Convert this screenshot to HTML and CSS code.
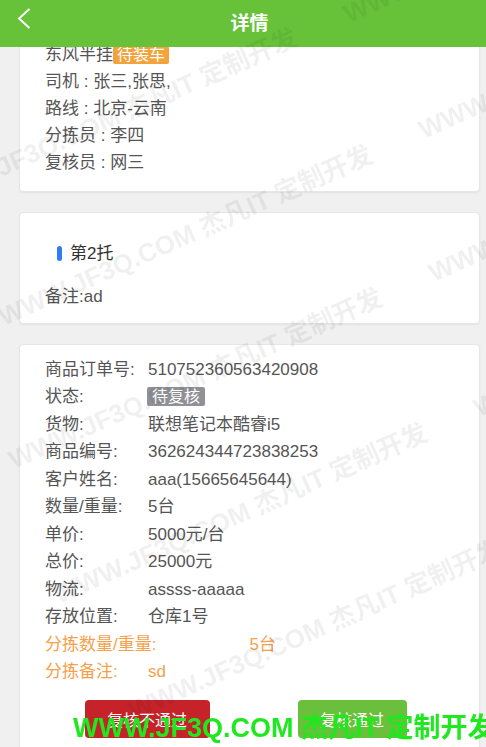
FILE: index.html
```html
<!DOCTYPE html>
<html lang="zh-CN">
<head>
<meta charset="utf-8">
<title>详情</title>
<link rel="stylesheet" href="styles.css">
</head>
<body>
<header class="topbar">
  <span class="back">
    <svg width="14" height="21" viewBox="0 0 14 21"><polyline points="12.5,1 2,10.5 12.5,20" fill="none" stroke="#fff" stroke-width="2"/></svg>
  </span>
  <h1 class="title">详情</h1>
</header>

<main class="page">
  <section class="card card-first">
    <div class="line">车辆 : 京A88888</div>
    <div class="line">东风半挂<span class="tag tag-orange">待装车</span></div>
    <div class="line">司机 : 张三,张思,</div>
    <div class="line">路线 : 北京-云南</div>
    <div class="line">分拣员 : 李四</div>
    <div class="line">复核员 : 网三</div>
  </section>

  <section class="card card-second">
    <h2 class="pallet"><span class="bar"></span>第2托</h2>
    <div class="line">备注:ad</div>
  </section>

  <section class="card card-third">
    <div class="row"><span class="label">商品订单号:</span><span class="value">510752360563420908</span></div>
    <div class="row"><span class="label">状态:</span><span class="value"><span class="tag tag-gray">待复核</span></span></div>
    <div class="row"><span class="label">货物:</span><span class="value">联想笔记本酷睿i5</span></div>
    <div class="row"><span class="label">商品编号:</span><span class="value">362624344723838253</span></div>
    <div class="row"><span class="label">客户姓名:</span><span class="value">aaa(15665645644)</span></div>
    <div class="row"><span class="label">数量/重量:</span><span class="value">5台</span></div>
    <div class="row"><span class="label">单价:</span><span class="value">5000元/台</span></div>
    <div class="row"><span class="label">总价:</span><span class="value">25000元</span></div>
    <div class="row"><span class="label">物流:</span><span class="value">assss-aaaaa</span></div>
    <div class="row"><span class="label">存放位置:</span><span class="value">仓库1号</span></div>
    <div class="row row-orange"><span class="label">分拣数量/重量:</span><span class="value value-far">5台</span></div>
    <div class="row row-orange"><span class="label">分拣备注:</span><span class="value">sd</span></div>
    <div class="actions">
      <button class="btn btn-red">复核不通过</button>
      <button class="btn btn-green">复核通过</button>
    </div>
  </section>
</main>

<div class="watermarks">
  <span class="wm wm1">WWW.JF3Q.COM 杰凡IT 定制开发</span>
  <span class="wm wm2">WWW.JF3Q.COM 杰凡IT 定制开发</span>
  <span class="wm wm3">WWW.JF3Q.COM 杰凡IT 定制开发</span>
  <span class="wm wm4">WWW.JF3Q.COM 杰凡IT 定制开发</span>
  <span class="wm wm5">WWW.JF3Q.COM 杰凡IT 定制开发</span>
  <span class="wm wm6">WWW.JF3Q.COM 杰凡IT 定制开发</span>
  <span class="wm wm7">WWW.JF3Q.COM 杰凡IT 定制开发</span>
  <span class="wm wm8">WWW.JF3Q.COM 杰凡IT 定制开发</span>
  <span class="wm wm9">WWW.JF3Q.COM 杰凡IT 定制开发</span>
</div>

<div class="brand">WWW.JF3Q.COM 杰凡IT 定制开发</div>
</body>
</html>
```

FILE: styles.css
```css
html, body {
  margin: 0;
  padding: 0;
}
body {
  background: #f0f0f0;
  font-family: "Liberation Sans", "Noto Sans CJK SC", sans-serif;
  color: #555;
  overflow: hidden;
}

.topbar {
  position: fixed;
  top: 0;
  left: 0;
  right: 0;
  height: 47px;
  background: #67c23a;
  display: flex;
  align-items: center;
  justify-content: center;
  z-index: 10;
}
.back {
  position: absolute;
  left: 17px;
  top: 8px;
  display: block;
  width: 14px;
  height: 21px;
}
.back svg { display: block; }
.title {
  margin: 0;
  padding-left: 13px;
  color: #fff;
  font-size: 19px;
  font-weight: bold;
  line-height: 47px;
}

.page {
  padding: 1px 6px 0 19px;
  display: flex;
  flex-direction: column;
  gap: 20px;
}

.card {
  background: #fff;
  border: 1px solid #e6e6e6;
  border-radius: 4px;
  box-shadow: 0 1px 2px rgba(0,0,0,0.06);
  padding: 12px 25px 13px;
  font-size: 17px;
}
.card-first {
  padding-bottom: 15px;
}
.line {
  line-height: 27px;
  white-space: nowrap;
}

.tag {
  display: inline-block;
  color: #fff;
  line-height: 19px;
  padding: 0 5px;
  border-radius: 2px;
  vertical-align: middle;
}
.tag-orange {
  background: #f2a33c;
  font-size: 16px;
  line-height: 18px;
  padding: 0 4px;
  position: relative;
  top: -1px;
}
.tag-gray {
  background: #909196;
  font-size: 16px;
  margin-left: -1px;
  position: relative;
  top: -1px;
}

.card-second {
  padding-top: 13px;
}
.pallet {
  margin: 14px 0 16px;
  padding-left: 12px;
  display: flex;
  align-items: center;
  gap: 8px;
  font-size: 17px;
  font-weight: normal;
  color: #333;
  line-height: 27px;
}
.bar {
  width: 5px;
  height: 15px;
  border-radius: 3px;
  background: #2f7df6;
}

.card-third {
  padding-top: 11px;
  padding-bottom: 30px;
}
.row {
  display: flex;
  line-height: 27.45px;
  white-space: nowrap;
}
.label {
  min-width: 103px;
}
.value-far {
  margin-left: 93px;
}
.row-orange {
  color: #f5a14b;
}

.actions {
  margin-top: 15px;
  padding-right: 8px;
  display: flex;
  justify-content: center;
  gap: 88px;
}
.btn {
  border: none;
  border-radius: 4px;
  height: 38px;
  color: #fff;
  font-family: inherit;
  font-size: 16px;
  padding: 0;
}
.btn-red {
  width: 125px;
  background: #c5222a;
}
.btn-green {
  width: 109px;
  background: #6abf3c;
}

.watermarks {
  position: fixed;
  inset: 0;
  pointer-events: none;
  overflow: hidden;
  z-index: 20;
}
.wm {
  position: absolute;
  white-space: nowrap;
  font-size: 26px;
  line-height: 26px;
  font-weight: bold;
  color: rgba(0,0,0,0.06);
  transform-origin: 0 50%;
  transform: rotate(-24deg);
}
.wm1 { left: -75px; top: 188px; }
.wm2 { left: 345px; top: 2px; }
.wm3 { left: 0; top: 305px; }
.wm4 { left: 420px; top: 118px; }
.wm5 { left: 10px; top: 448px; }
.wm6 { left: 430px; top: 261px; }
.wm7 { left: 55px; top: 583px; }
.wm8 { left: 475px; top: 396px; }
.wm9 { left: 130px; top: 699px; }

.brand {
  position: fixed;
  left: 73px;
  top: 712px;
  white-space: nowrap;
  font-size: 27px;
  line-height: 32px;
  font-weight: bold;
  color: #1fe81f;
  z-index: 30;
}
```
